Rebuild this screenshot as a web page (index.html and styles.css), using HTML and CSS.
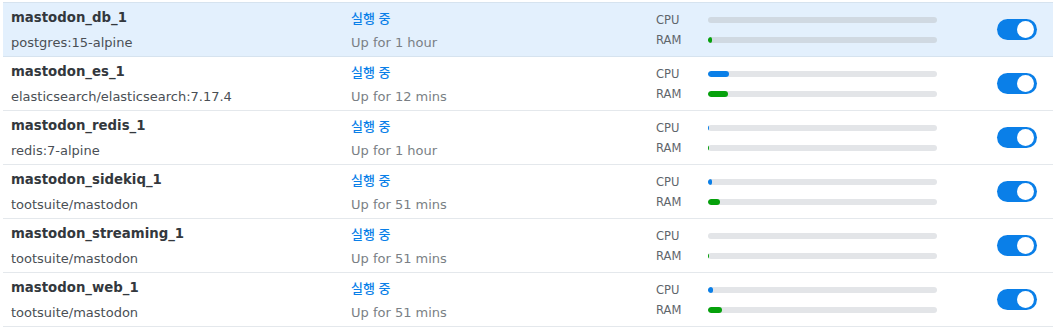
FILE: index.html
```html
<!DOCTYPE html>
<html lang="ko">
<head>
    <meta charset="UTF-8">
    <title>Containers</title>
    <link rel="stylesheet" href="styles.css">
</head>
<body>
    <div class="container-list">
        <div class="row selected">
            <div class="col-name">
                <div class="name">mastodon_db_1</div>
                <div class="sub">postgres:15-alpine</div>
            </div>
            <div class="col-status">
                <div class="status">실행 중</div>
                <div class="sub">Up for 1 hour</div>
            </div>
            <div class="col-usage">
                <div class="usage"><span class="label">CPU</span><div class="track"></div></div>
                <div class="usage"><span class="label">RAM</span><div class="track"><div class="fill ram" style="width: 4px"></div></div></div>
            </div>
            <div class="col-toggle"><span class="toggle"></span></div>
        </div>
        <div class="row">
            <div class="col-name">
                <div class="name">mastodon_es_1</div>
                <div class="sub">elasticsearch/elasticsearch:7.17.4</div>
            </div>
            <div class="col-status">
                <div class="status">실행 중</div>
                <div class="sub">Up for 12 mins</div>
            </div>
            <div class="col-usage">
                <div class="usage"><span class="label">CPU</span><div class="track"><div class="fill cpu" style="width: 21px"></div></div></div>
                <div class="usage"><span class="label">RAM</span><div class="track"><div class="fill ram" style="width: 20px"></div></div></div>
            </div>
            <div class="col-toggle"><span class="toggle"></span></div>
        </div>
        <div class="row">
            <div class="col-name">
                <div class="name">mastodon_redis_1</div>
                <div class="sub">redis:7-alpine</div>
            </div>
            <div class="col-status">
                <div class="status">실행 중</div>
                <div class="sub">Up for 1 hour</div>
            </div>
            <div class="col-usage">
                <div class="usage"><span class="label">CPU</span><div class="track"><div class="fill cpu" style="width: 1px"></div></div></div>
                <div class="usage"><span class="label">RAM</span><div class="track"><div class="fill ram" style="width: 1px"></div></div></div>
            </div>
            <div class="col-toggle"><span class="toggle"></span></div>
        </div>
        <div class="row">
            <div class="col-name">
                <div class="name">mastodon_sidekiq_1</div>
                <div class="sub">tootsuite/mastodon</div>
            </div>
            <div class="col-status">
                <div class="status">실행 중</div>
                <div class="sub">Up for 51 mins</div>
            </div>
            <div class="col-usage">
                <div class="usage"><span class="label">CPU</span><div class="track"><div class="fill cpu" style="width: 4px"></div></div></div>
                <div class="usage"><span class="label">RAM</span><div class="track"><div class="fill ram" style="width: 12px"></div></div></div>
            </div>
            <div class="col-toggle"><span class="toggle"></span></div>
        </div>
        <div class="row">
            <div class="col-name">
                <div class="name">mastodon_streaming_1</div>
                <div class="sub">tootsuite/mastodon</div>
            </div>
            <div class="col-status">
                <div class="status">실행 중</div>
                <div class="sub">Up for 51 mins</div>
            </div>
            <div class="col-usage">
                <div class="usage"><span class="label">CPU</span><div class="track"></div></div>
                <div class="usage"><span class="label">RAM</span><div class="track"><div class="fill ram" style="width: 1px"></div></div></div>
            </div>
            <div class="col-toggle"><span class="toggle"></span></div>
        </div>
        <div class="row">
            <div class="col-name">
                <div class="name">mastodon_web_1</div>
                <div class="sub">tootsuite/mastodon</div>
            </div>
            <div class="col-status">
                <div class="status">실행 중</div>
                <div class="sub">Up for 51 mins</div>
            </div>
            <div class="col-usage">
                <div class="usage"><span class="label">CPU</span><div class="track"><div class="fill cpu" style="width: 5px"></div></div></div>
                <div class="usage"><span class="label">RAM</span><div class="track"><div class="fill ram" style="width: 14px"></div></div></div>
            </div>
            <div class="col-toggle"><span class="toggle"></span></div>
        </div>
    </div>
</body>
</html>
```

FILE: styles.css
```css
:root {
    --blue: #0a7fe8;
    --green: #05a10b;
    --text: #3a3f45;
    --muted: #7a7f85;
    --line: #e4e8ec;
}

* {
    box-sizing: border-box;
    margin: 0;
    padding: 0;
}

body {
    font-family: 'DejaVu Sans', Verdana, 'Noto Sans CJK KR', sans-serif;
    font-size: 13px;
    color: var(--text);
    background: #fff;
    padding: 2px 9px 0 3px;
}

.row {
    display: flex;
    height: 54px;
    border-bottom: 1px solid var(--line);
}

.row.selected {
    height: 55px;
    background-color: #e3f0fd;
    border-top: 1px solid #d6e3ef;
    border-bottom-color: #d6e3ef;
}

.col-name {
    width: 340px;
    padding: 5px 0 0 8px;
}

.name {
    font-weight: bold;
    font-size: 13.3px;
    line-height: 20px;
    color: #33383d;
}

.sub {
    line-height: 20px;
    margin-top: 5px;
    color: #4a4f55;
}

.col-status {
    width: 305px;
    padding: 5px 0 0 8px;
}

.col-status .sub {
    color: var(--muted);
}

.status {
    line-height: 20px;
    color: var(--blue);
    font-family: 'Noto Sans CJK KR', sans-serif;
    font-size: 13px;
    font-weight: 500;
}

.col-usage {
    width: 290px;
    padding: 7px 0 0 8px;
}

.usage {
    display: flex;
    align-items: center;
    height: 20px;
}

.label {
    width: 52px;
    color: #5f656b;
    font-size: 11.5px;
}

.track {
    width: 229px;
    height: 6px;
    border-radius: 3px;
    background-color: #e3e5e8;
    overflow: hidden;
}

.selected .track {
    background-color: #d0d9e2;
}

.fill {
    height: 100%;
    border-radius: 3px;
}

.fill.cpu {
    background-color: var(--blue);
}

.fill.ram {
    background-color: var(--green);
}

.col-toggle {
    flex: 1;
    display: flex;
    align-items: center;
    justify-content: flex-end;
    padding-right: 16px;
}

.toggle {
    position: relative;
    width: 40px;
    height: 21px;
    border-radius: 11px;
    background-color: var(--blue);
}

.toggle::after {
    content: '';
    position: absolute;
    top: 2px;
    right: 3px;
    width: 17px;
    height: 17px;
    border-radius: 50%;
    background: #fff;
}
```
